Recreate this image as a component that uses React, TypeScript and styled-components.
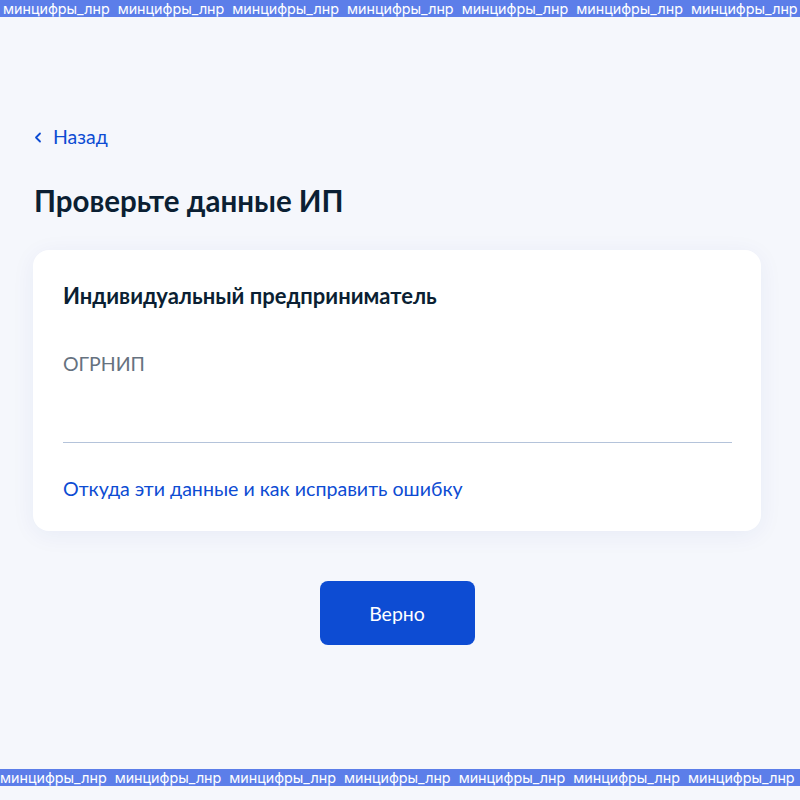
import React from "react";
import styled, { createGlobalStyle } from "styled-components";

const GlobalStyle = createGlobalStyle`
    html, body {
        margin: 0;
        padding: 0;
        background: #f5f7fc;
    }
    body {
        font-family: Lato, "Noto Sans", sans-serif;
    }
`;

const Page = styled.div`
    display: flex;
    flex-direction: column;
    height: 800px;
    overflow: hidden;
    background: #f5f7fc;
`;

const Watermark = styled.div<{ $offset: number }>`
    display: flex;
    gap: 8px;
    height: 17px;
    align-items: center;
    padding-left: ${({ $offset }) => $offset}px;
    background: #5c7ee9;
    color: #ffffff;
    font-family: Inter, "Noto Sans", sans-serif;
    font-size: 14.3px;
    line-height: 17px;
    white-space: nowrap;
    overflow: hidden;
    flex-shrink: 0;
`;

const Main = styled.main`
    flex: 1;
    display: flex;
    flex-direction: column;
    padding: 109px 39px 0 33px;
`;

const BackLink = styled.a`
    display: inline-flex;
    align-items: center;
    gap: 11px;
    align-self: flex-start;
    color: #0d4cd3;
    font-size: 19.5px;
    line-height: 22px;
    text-decoration: none;
    padding-left: 1px;
    cursor: pointer;
    svg {
        width: 8px;
        height: 11px;
    }
`;

const Title = styled.h1`
    margin: 35px 0 0 1px;
    font-size: 29.5px;
    line-height: 36px;
    font-weight: 700;
    color: #0b1f33;
`;

const Card = styled.section`
    margin-top: 31px;
    background: #ffffff;
    border-radius: 16px;
    box-shadow: 0 4px 24px rgba(0, 51, 150, 0.06);
    padding: 32px 29px 29px 30px;
    display: flex;
    flex-direction: column;
`;

const CardTitle = styled.h2`
    margin: 0;
    font-size: 22px;
    line-height: 28px;
    font-weight: 700;
    color: #0b1f33;
`;

const FieldLabel = styled.div`
    margin-top: 42px;
    font-size: 19.5px;
    line-height: 24px;
    color: #66727f;
`;

const FieldLine = styled.div`
    margin-top: 66px;
    height: 1px;
    background: #b4c3da;
`;

const HelpLink = styled.a`
    margin-top: 33px;
    font-size: 19.6px;
    line-height: 26px;
    color: #0d4cd3;
    text-decoration: none;
    cursor: pointer;
`;

const Actions = styled.div`
    display: flex;
    justify-content: center;
    margin-top: 50px;
`;

const PrimaryButton = styled.button`
    width: 155px;
    height: 64px;
    border: none;
    border-radius: 8px;
    background: #0d4cd3;
    color: #ffffff;
    font-family: Lato, "Noto Sans", sans-serif;
    font-size: 19.5px;
    cursor: pointer;
`;

const BottomGap = styled.div`
    height: 14px;
    flex-shrink: 0;
`;

const marks = Array.from({ length: 7 }, () => "минцифры_лнр");

export default function App() {
    return (
        <>
            <GlobalStyle />
            <Page>
                <Watermark $offset={3}>
                    {marks.map((m, i) => (
                        <span key={i}>{m}</span>
                    ))}
                </Watermark>
                <Main>
                    <BackLink>
                        <svg viewBox="0 0 8 11" fill="none">
                            <path d="M6 1.5L2 5.5L6 9.5" stroke="#0d4cd3" strokeWidth="1.8" strokeLinecap="round" strokeLinejoin="round" />
                        </svg>
                        Назад
                    </BackLink>
                    <Title>Проверьте данные ИП</Title>
                    <Card>
                        <CardTitle>Индивидуальный предприниматель</CardTitle>
                        <FieldLabel>ОГРНИП</FieldLabel>
                        <FieldLine />
                        <HelpLink>Откуда эти данные и как исправить ошибку</HelpLink>
                    </Card>
                    <Actions>
                        <PrimaryButton>Верно</PrimaryButton>
                    </Actions>
                </Main>
                <Watermark $offset={0}>
                    {marks.map((m, i) => (
                        <span key={i}>{m}</span>
                    ))}
                </Watermark>
                <BottomGap />
            </Page>
        </>
    );
}
